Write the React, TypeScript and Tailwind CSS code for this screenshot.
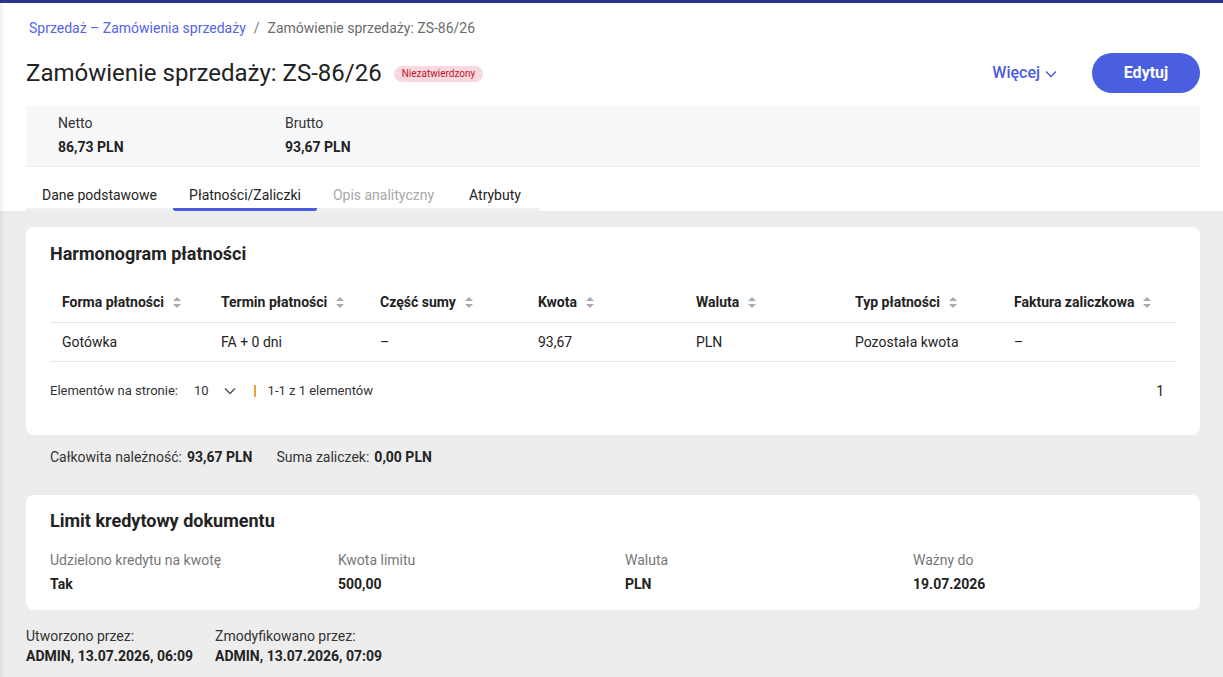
import React from 'react';

const SortIcon = () => (
  <svg width="10" height="13" viewBox="0 0 10 13" className="ml-2 shrink-0">
    <path d="M5 1 L9 5 L1 5 Z" fill="#a9a9b1" />
    <path d="M5 12 L9 8 L1 8 Z" fill="#a9a9b1" />
  </svg>
);

const Chevron = ({ className = '' }: { className?: string }) => (
  <svg width="14" height="14" viewBox="0 0 14 14" className={className}>
    <path d="M2 4.5 L7 9.5 L12 4.5" fill="none" stroke="currentColor" strokeWidth="1.5" />
  </svg>
);

const columns = [
  'Forma płatności',
  'Termin płatności',
  'Część sumy',
  'Kwota',
  'Waluta',
  'Typ płatności',
  'Faktura zaliczkowa',
];

const row = ['Gotówka', 'FA + 0 dni', '–', '93,67', 'PLN', 'Pozostała kwota', '–'];

const tabs = [
  { label: 'Dane podstawowe', state: 'normal', pad: 'px-[16px]' },
  { label: 'Płatności/Zaliczki', state: 'active', pad: 'px-[16px]' },
  { label: 'Opis analityczny', state: 'disabled', pad: 'px-[16px]' },
  { label: 'Atrybuty', state: 'normal', pad: 'pl-[19px] pr-[19px]' },
];

const credit = [
  { label: 'Udzielono kredytu na kwotę', value: 'Tak' },
  { label: 'Kwota limitu', value: '500,00' },
  { label: 'Waluta', value: 'PLN' },
  { label: 'Ważny do', value: '19.07.2026' },
];

const App = () => {
  return (
    <div
      className="w-full h-[677px] overflow-hidden flex flex-col bg-white border-t-[3px] border-[#27358c] text-[#232323] shadow-[inset_5px_0_4px_-3px_rgba(0,0,0,0.08)]"
      style={{ fontFamily: 'Roboto, "Noto Sans", sans-serif' }}
    >
      {/* Header */}
      <div className="pl-[26px] pr-[23px]">
        <div className="pt-[12px] h-[38px] flex items-center text-sm pl-[3px]">
          <span className="text-[#5563e6]">Sprzedaż – Zamówienia sprzedaży</span>
          <span className="text-[#777] mx-[8px]">/</span>
          <span className="text-[#6b6b6b]">Zamówienie sprzedaży: ZS-86/26</span>
        </div>
        <div className="flex items-center justify-between h-[65px] pb-[1px]">
          <div className="flex items-center">
            <h1 className="text-[24px] leading-none text-[#222]">Zamówienie sprzedaży: ZS-86/26</h1>
            <span className="ml-[12px] mt-[2px] bg-[#f7d9de] text-[#c4112f] text-[10px] leading-none px-[8px] py-[3px] rounded-full">
              Niezatwierdzony
            </span>
          </div>
          <div className="flex items-center">
            <button className="flex items-center gap-[4px] text-[#4b5be0] text-base font-medium mr-[34px]">
              Więcej
              <Chevron className="mt-[2px]" />
            </button>
            <button className="h-[40px] w-[108px] rounded-full bg-[#4a5ee0] text-white text-base font-bold">
              Edytuj
            </button>
          </div>
        </div>
        {/* Summary */}
        <div className="bg-[#f7f8fa] h-[61px] flex items-start pt-[9px] pl-[32px] border-b border-[#eceef2]">
          <div className="w-[227px]">
            <div className="text-sm text-[#333] leading-[17px]">Netto</div>
            <div className="text-sm font-bold mt-[7px] leading-[17px]">86,73 PLN</div>
          </div>
          <div>
            <div className="text-sm text-[#333] leading-[17px]">Brutto</div>
            <div className="text-sm font-bold mt-[7px] leading-[17px]">93,67 PLN</div>
          </div>
        </div>
        {/* Tabs */}
        <div className="flex mt-[10px] h-[34px]">
          {tabs.map((t) => (
            <div
              key={t.label}
              className={
                t.pad +
                ' flex items-center text-sm border-b-[3px] pt-[5px] ' +
                (t.state === 'active'
                  ? 'border-[#4b5be0] text-[#232323] rounded-b-[2px]'
                  : t.state === 'disabled'
                    ? 'border-[#eef0f3] text-[#a8a8a8]'
                    : 'border-[#eef0f3] text-[#232323]')
              }
            >
              {t.label}
            </div>
          ))}
        </div>
      </div>

      {/* Gray content */}
      <div className="flex-1 bg-[#ededed] pl-[26px] pr-[23px] pt-[16px] shadow-[inset_5px_0_4px_-3px_rgba(0,0,0,0.08)]">
        {/* Harmonogram */}
        <div className="bg-white rounded-lg px-[24px] pt-[15px] h-[208px]">
          <h2 className="text-lg font-bold leading-[24px]">Harmonogram płatności</h2>
          <div className="mt-[16px]">
            <div className="grid grid-cols-[159px_159px_158px_158px_159px_159px_1fr] h-[41px] border-b border-[#e4e4f0] items-center">
              {columns.map((c) => (
                <div key={c} className="flex items-center pl-[12px] text-sm font-bold">
                  {c}
                  <SortIcon />
                </div>
              ))}
            </div>
            <div className="grid grid-cols-[159px_159px_158px_158px_159px_159px_1fr] h-[39px] border-b border-[#e4e4f0] items-center">
              {row.map((c, i) => (
                <div key={i} className="pl-[12px] text-sm">
                  {c}
                </div>
              ))}
            </div>
          </div>
          <div className="flex items-center justify-between h-[58px]">
            <div className="flex items-center text-[13px] text-[#333]">
              <span>Elementów na stronie:</span>
              <span className="ml-[16px]">10</span>
              <Chevron className="ml-[14px] text-[#555]" />
              <span className="ml-[17px] w-[2px] h-[12px] bg-[#f0a030]" />
              <span className="ml-[12px]">1-1 z 1 elementów</span>
            </div>
            <span className="text-sm mr-[12px]">1</span>
          </div>
        </div>

        {/* Totals */}
        <div className="h-[44px] flex items-center pl-[24px] text-sm">
          <span className="text-[#333]">Całkowita należność:</span>
          <span className="font-bold ml-[5px]">93,67 PLN</span>
          <span className="text-[#333] ml-[24px]">Suma zaliczek:</span>
          <span className="font-bold ml-[5px]">0,00 PLN</span>
        </div>

        {/* Limit kredytowy */}
        <div className="bg-white rounded-lg px-[24px] pt-[14px] h-[115px] mt-[16px]">
          <h2 className="text-lg font-bold leading-[24px]">Limit kredytowy dokumentu</h2>
          <div className="grid grid-cols-[288px_287px_288px_1fr] mt-[18px]">
            {credit.map((c) => (
              <div key={c.label}>
                <div className="text-sm text-[#777] leading-[18px]">{c.label}</div>
                <div className="text-sm font-bold mt-[6px] leading-[18px]">{c.value}</div>
              </div>
            ))}
          </div>
        </div>

        {/* Footer */}
        <div className="flex pt-[17px] text-sm">
          <div className="w-[189px]">
            <div className="text-[#333] leading-[18px]">Utworzono przez:</div>
            <div className="font-bold mt-[2px] leading-[18px]">ADMIN, 13.07.2026, 06:09</div>
          </div>
          <div>
            <div className="text-[#333] leading-[18px]">Zmodyfikowano przez:</div>
            <div className="font-bold mt-[2px] leading-[18px]">ADMIN, 13.07.2026, 07:09</div>
          </div>
        </div>
      </div>
    </div>
  );
};

export default App;
